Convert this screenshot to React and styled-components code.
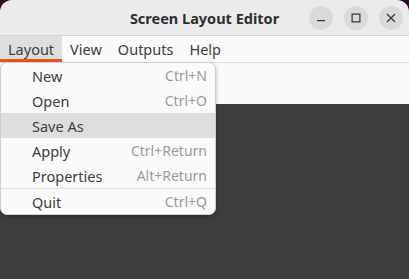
import styled, { createGlobalStyle } from "styled-components";

const Global = createGlobalStyle`
  html, body {
    margin: 0;
    padding: 0;
    background: #2c0b22;
    font-family: "Noto Sans", "DejaVu Sans", sans-serif;
  }
`;

const Window = styled.div`
  width: 409px;
  height: 279px;
  border-radius: 12px 12px 0 0;
  overflow: hidden;
  background: #3d3d3d;
  display: flex;
  flex-direction: column;
  position: relative;
`;

const TitleBar = styled.div`
  height: 35px;
  background: #ebebeb;
  border-bottom: 1px solid #d4d4d4;
  display: flex;
  align-items: center;
  justify-content: flex-end;
  padding-right: 6px;
  gap: 11px;
  position: relative;
`;

const Title = styled.div`
  position: absolute;
  left: 0;
  right: 0;
  top: 0;
  bottom: 0;
  display: flex;
  align-items: center;
  justify-content: center;
  font-weight: 700;
  font-size: 14.5px;
  color: #2e2e2e;
  pointer-events: none;
`;

const WinButton = styled.button`
  width: 24px;
  height: 24px;
  border-radius: 50%;
  border: none;
  background: #dadada;
  display: flex;
  align-items: center;
  justify-content: center;
  padding: 0;
  position: relative;
`;

const MenuBar = styled.div`
  height: 26px;
  background: #fafafa;
  display: flex;
  align-items: stretch;
  border-bottom: 1px solid #dcdcdc;
`;

const MenuTitle = styled.div`
  padding: 0 8px;
  font-size: 14.5px;
  color: #3d3d3d;
  display: flex;
  align-items: center;
  background: ${(p) => (p.$open ? "#dedede" : "transparent")};
  box-shadow: ${(p) => (p.$open ? "inset 0 -3px 0 #e95420" : "none")};
`;

const ToolArea = styled.div`
  height: 41px;
  background: #fafafa;
`;

const Dropdown = styled.div`
  position: absolute;
  left: 0;
  top: 62px;
  width: 214px;
  background: #fafafa;
  border: 1px solid #cfcfcf;
  border-radius: 7px;
  box-shadow: 0 2px 4px rgba(0, 0, 0, 0.25);
  overflow: hidden;
  display: flex;
  flex-direction: column;
`;

const Item = styled.div`
  height: 25px;
  display: flex;
  align-items: center;
  justify-content: space-between;
  padding: 0 8px 0 31px;
  font-size: 14.5px;
  color: #3d3d3d;
  background: ${(p) => (p.$hover ? "#dedede" : "transparent")};
`;

const Shortcut = styled.span`
  color: #9a9a9a;
  font-size: 14px;
`;

const Separator = styled.div`
  height: 1px;
  background: #dcdcdc;
`;

const items = [
  ["New", "Ctrl+N"],
  ["Open", "Ctrl+O"],
  ["Save As", ""],
  ["Apply", "Ctrl+Return"],
  ["Properties", "Alt+Return"],
];

export default function App() {
  return (
    <>
      <Global />
      <Window>
        <TitleBar>
          <Title>Screen Layout Editor</Title>
          <WinButton>
            <svg width="10" height="10" viewBox="0 0 10 10">
              <rect x="1" y="7" width="8" height="1.2" fill="#333" />
            </svg>
          </WinButton>
          <WinButton>
            <svg width="10" height="10" viewBox="0 0 10 10">
              <rect x="1.1" y="1.1" width="7.8" height="7.8" fill="none" stroke="#333" strokeWidth="1.2" />
            </svg>
          </WinButton>
          <WinButton>
            <svg width="10" height="10" viewBox="0 0 10 10">
              <path d="M1 1 L9 9 M9 1 L1 9" stroke="#333" strokeWidth="1.2" />
            </svg>
          </WinButton>
        </TitleBar>
        <MenuBar>
          <MenuTitle $open>Layout</MenuTitle>
          <MenuTitle>View</MenuTitle>
          <MenuTitle>Outputs</MenuTitle>
          <MenuTitle>Help</MenuTitle>
        </MenuBar>
        <ToolArea />
        <Dropdown>
          {items.map(([label, key]) => (
            <Item key={label} $hover={label === "Save As"}>
              <span>{label}</span>
              <Shortcut>{key}</Shortcut>
            </Item>
          ))}
          <Separator />
          <Item>
            <span>Quit</span>
            <Shortcut>Ctrl+Q</Shortcut>
          </Item>
        </Dropdown>
      </Window>
    </>
  );
}
